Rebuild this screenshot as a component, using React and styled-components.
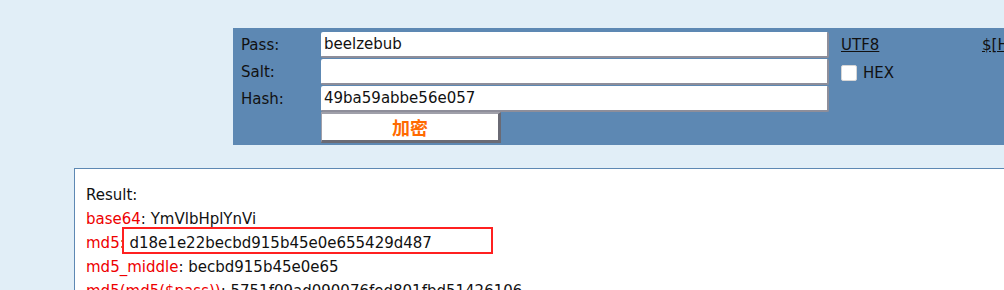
import React from "react";
import styled, { createGlobalStyle } from "styled-components";

const GlobalStyle = createGlobalStyle`
  html, body {
    margin: 0;
    padding: 0;
    background: #e1eef7;
    font-family: "DejaVu Sans", Verdana, sans-serif;
    font-size: 15px;
    color: #111;
  }
`;

const Page = styled.div`
  width: 1004px;
  height: 290px;
  overflow: hidden;
  padding-top: 28px;
  box-sizing: border-box;
`;

const Panel = styled.div`
  margin-left: 233px;
  background: #5d88b3;
  height: 117px;
  box-sizing: border-box;
  padding-top: 4px;
  display: grid;
  grid-template-columns: 88px 508px 12px 141px auto;
  grid-template-rows: 27px 27px 25px 31px;
  align-items: start;
`;

const Label = styled.div`
  padding-left: 8px;
  font-size: 15px;
  line-height: 27px;
  color: #111;
`;

const Field = styled.div`
  height: 26px;
  box-sizing: border-box;
  background: #fff;
  border-radius: 2px;
  border-right: 2px solid #8e8e9a;
  border-bottom: 2px solid #8e8e9a;
  padding-left: 3px;
  font-size: 15px;
  line-height: 25px;
  color: #111;
`;

const Gap = styled.div``;

const Link = styled.a`
  color: #111;
  text-decoration: underline;
  font-size: 15px;
  line-height: 27px;
  cursor: pointer;
`;

const CheckRow = styled.label`
  display: flex;
  align-items: center;
  gap: 6px;
  height: 26px;
  font-size: 15px;
  padding-top: 1px;
`;

const Check = styled.span`
  display: inline-block;
  width: 14px;
  height: 14px;
  background: #fff;
  border-radius: 2px;
  border: 1px solid #d6d6d6;
`;

const Button = styled.button`
  grid-column: 2;
  width: 180px;
  height: 31px;
  box-sizing: border-box;
  background: #fff;
  border-top: 2px solid #a0a0aa;
  border-left: 1px solid #a0a0aa;
  border-right: 3px solid #6a6a74;
  border-bottom: 3px solid #6a6a74;
  color: #ff6a00;
  font-family: "Noto Sans CJK SC", sans-serif;
  font-weight: 700;
  font-size: 18px;
  line-height: 24px;
  padding: 0;
  margin-top: 1px;
`;

const ResultBox = styled.div`
  position: relative;
  margin-left: 74px;
  margin-top: 23px;
  height: 200px;
  background: #fff;
  border: 1px solid #5d88b3;
  border-right: none;
  padding: 14px 0 0 11px;
  font-size: 15px;
`;

const Line = styled.div`
  line-height: 24px;
  white-space: nowrap;
`;

const Key = styled.span`
  color: #ee0000;
`;

const Marker = styled.div`
  position: absolute;
  left: 47px;
  top: 58px;
  width: 371px;
  height: 27px;
  box-sizing: border-box;
  border: 2px solid #ff2020;
`;

const rows = [
  ["base64", "YmVlbHplYnVi"],
  ["md5", "d18e1e22becbd915b45e0e655429d487"],
  ["md5_middle", "becbd915b45e0e65"],
  ["md5(md5($pass))", "5751f09ad090076fed801fbd51426106"],
];

export default function App() {
  return (
    <Page>
      <GlobalStyle />
      <Panel>
        <Label>Pass:</Label>
        <Field>beelzebub</Field>
        <Gap />
        <Link>UTF8</Link>
        <Link>$[H]</Link>

        <Label>Salt:</Label>
        <Field />
        <Gap />
        <CheckRow>
          <Check />
          HEX
        </CheckRow>
        <Gap />

        <Label>Hash:</Label>
        <Field>49ba59abbe56e057</Field>
        <Gap />
        <Gap />
        <Gap />

        <Button>加密</Button>
      </Panel>
      <ResultBox>
        <Line>Result:</Line>
        {rows.map(([k, v]) => (
          <Line key={k}>
            <Key>{k}</Key>: {v}
          </Line>
        ))}
        <Marker />
      </ResultBox>
    </Page>
  );
}
